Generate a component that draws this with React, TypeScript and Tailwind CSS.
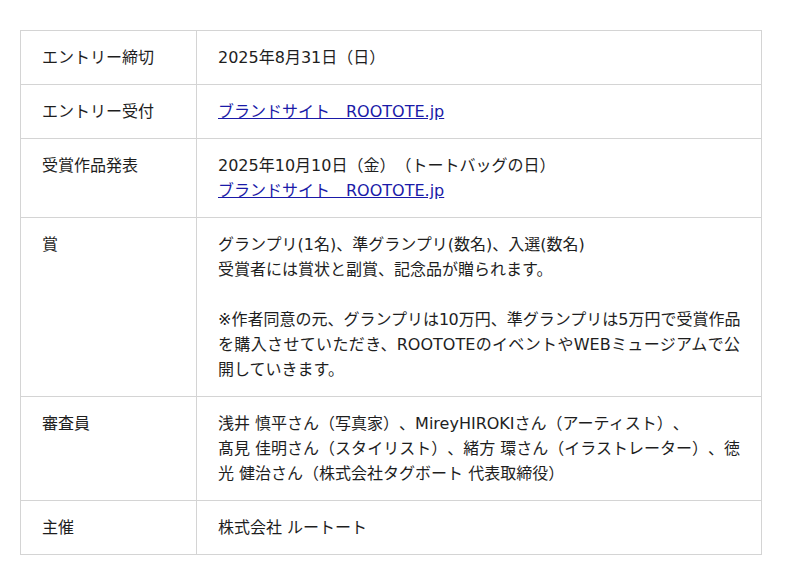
import React from 'react';

const Link = () => (
  <a href="#" className="text-[#1a1aa8] underline">ブランドサイト　ROOTOTE.jp</a>
);

const rows: { label: string; content: React.ReactNode }[] = [
  { label: 'エントリー締切', content: '2025年8月31日（日）' },
  { label: 'エントリー受付', content: <Link /> },
  {
    label: '受賞作品発表',
    content: (
      <>
        2025年10月10日（金）（トートバッグの日）
        <br />
        <Link />
      </>
    ),
  },
  {
    label: '賞',
    content: (
      <>
        <div>グランプリ(1名)、準グランプリ(数名)、入選(数名)</div>
        <div>受賞者には賞状と副賞、記念品が贈られます。</div>
        <div className="mt-[25px] whitespace-nowrap tracking-[-0.45px] [text-align-last:justify]">
          ※作者同意の元、グランプリは10万円、準グランプリは5万円で受賞作品
        </div>
        <div className="[text-align-last:justify]">
          を購入させていただき、ROOTOTEのイベントやWEBミュージアムで公
        </div>
        <div>開していきます。</div>
      </>
    ),
  },
  {
    label: '審査員',
    content: (
      <>
        <div>浅井 慎平さん（写真家）、MireyHIROKIさん（アーティスト）、</div>
        <div className="[text-align-last:justify]">髙見 佳明さん（スタイリスト）、緒方 環さん（イラストレーター）、徳</div>
        <div>光 健治さん（株式会社タグボート 代表取締役）</div>
      </>
    ),
  },
  { label: '主催', content: '株式会社 ルートート' },
];

export default function App() {
  return (
    <div className="bg-white min-h-[585px] pt-[30px] pl-[20px] [font-family:DejaVu_Sans,Noto_Sans_CJK_JP,sans-serif] [text-spacing-trim:space-all] text-[16px] leading-[25px] text-[#1e1e1e]">
      <table className="w-[742px] border-collapse table-fixed">
        <tbody>
          {rows.map(row => (
            <tr key={row.label}>
              <th className="w-[176px] border border-[#d4d4d4] align-top text-left font-normal px-[21px] py-[14px]">
                {row.label}
              </th>
              <td className="border border-[#d4d4d4] align-top px-[21px] py-[14px] text-justify">
                {row.content}
              </td>
            </tr>
          ))}
        </tbody>
      </table>
    </div>
  );
}
